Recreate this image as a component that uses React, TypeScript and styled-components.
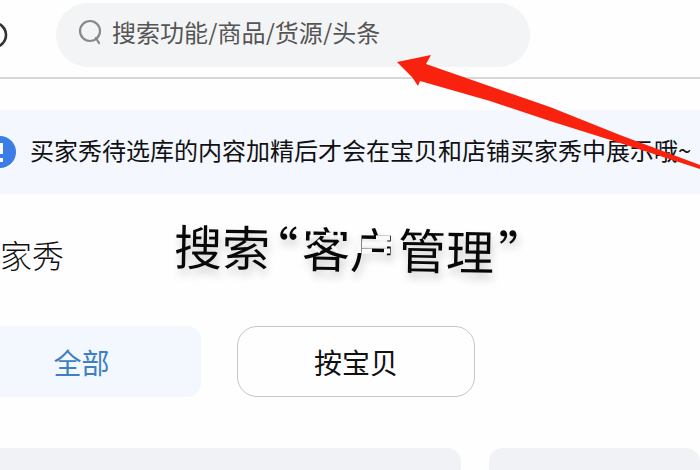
import React from "react";
import styled, { createGlobalStyle } from "styled-components";

const GlobalStyle = createGlobalStyle`
  * { box-sizing: border-box; }
  body {
    margin: 0;
    background: #fefefe;
    color: #111;
    font-family: "Noto Sans CJK SC", sans-serif;
    overflow: hidden;
  }
  button, input { font-family: inherit; }
`;

const Page = styled.div`
  position: relative;
  height: 100vh;
  overflow: hidden;
`;

/* The page is scrolled sideways, so its first 32px lie past the left edge. */
const Scrolled = styled.div`
  display: flex;
  flex-direction: column;
  height: 100%;
  margin-left: -32px;
`;

const Header = styled.header`
  display: flex;
  align-items: center;
  gap: 48px;
  padding: 3px 16px 10px 12px;
  border-bottom: 2px solid #d6d8d8;
`;

const RingIcon = styled.svg`
  flex: none;
  width: 28px;
  height: 28px;
`;

const SearchBox = styled.label`
  display: flex;
  flex: 0 1 474px;
  gap: 8px;
  height: 64px;
  padding: 14px 24px 18px 22px;
  border-radius: 32px;
  background: #f3f4f5;
`;

const SearchIcon = styled.svg`
  flex: none;
  width: 26px;
  height: 28px;
`;

const SearchInput = styled.input`
  flex: 1;
  min-width: 0;
  height: 28px;
  padding: 0;
  border: 0;
  outline: 0;
  background: transparent;
  font-size: 24px;
  color: #555;
  &::placeholder { color: #555; opacity: 1; }
`;

const Notice = styled.section`
  display: flex;
  flex: none;
  align-items: center;
  gap: 14px;
  height: 84px;
  margin-top: 31px;
  padding-left: 16px;
  background: #f4f7fe;
`;

const NoticeIcon = styled.svg`
  flex: none;
  width: 32px;
  height: 32px;
`;

const NoticeText = styled.p`
  margin: 0;
  padding-bottom: 4px;
  font-size: 24px;
  line-height: 36px;
  white-space: nowrap;
`;

const TitleRow = styled.div`
  display: flex;
  flex: none;
  align-items: center;
  height: 120px;
`;

const Title = styled.h1`
  margin: 0;
  font-size: 32px;
  font-weight: 300;
  line-height: 48px;
`;

const Filters = styled.div`
  display: flex;
  flex: none;
  gap: 36px;
  margin-top: 12px;
`;

const Filter = styled.button<{ $active?: boolean }>`
  width: ${(p) => (p.$active ? 233 : 238)}px;
  height: 71px;
  padding: ${(p) => (p.$active ? "0 6px 0 0" : "0")};
  border: ${(p) => (p.$active ? "0" : "1px solid #c4c5c6")};
  border-radius: ${(p) => (p.$active ? 14 : 20)}px;
  background: ${(p) => (p.$active ? "#f3f7fe" : "#fefefe")};
  color: ${(p) => (p.$active ? "#3f7fc4" : "#111")};
  font-size: 28px;
`;

const Cards = styled.div`
  display: grid;
  flex: 1;
  grid-template-columns: 7fr 3fr;
  gap: 28px;
  margin-top: 51px;
`;

const Card = styled.div`
  border-radius: 14px 14px 0 0;
  background: #f1f2f5;
`;

const Caption = styled.div`
  position: absolute;
  top: 213px;
  left: 174px;
  display: flex;
  font-size: 48px;
  line-height: 68px;
  white-space: nowrap;
  color: #080808;
  text-shadow: 2px 6px 8px rgba(0, 0, 0, 0.2);
  transform: rotate(1deg);
`;

/* Half-width forms of the full-width quotation marks. */
const Quote = styled.span`
  padding: 0 4px;
  font-feature-settings: "halt" 1;
`;

const Smudge = styled.svg`
  position: absolute;
  top: 226px;
  left: 298px;
  width: 108px;
  height: 34px;
`;

const Arrow = styled.svg`
  position: absolute;
  top: 50px;
  left: 396px;
  width: 304px;
  height: 126px;
`;

export default function App() {
  return (
    <Page>
      <GlobalStyle />
      <Scrolled>
        <Header>
          <RingIcon viewBox="0 0 28 28" aria-hidden="true">
            <circle cx="14" cy="14" r="12" fill="none" stroke="#333" strokeWidth="2.6" />
          </RingIcon>
          <SearchBox>
            <SearchIcon viewBox="0 0 26 28" fill="none" stroke="#85898c" strokeWidth="2.2" aria-hidden="true">
              <circle cx="12" cy="14" r="10" />
              <path d="M18 21l3 5" strokeLinecap="round" />
            </SearchIcon>
            <SearchInput type="text" placeholder="搜索功能/商品/货源/头条" aria-label="搜索" />
          </SearchBox>
        </Header>
        <Notice>
          <NoticeIcon viewBox="0 0 32 32" aria-hidden="true">
            <circle cx="16" cy="16" r="16" fill="#3b7de6" />
            <path d="M17 7v11M17 22v4" stroke="#fff" strokeWidth="4" />
          </NoticeIcon>
          <NoticeText>买家秀待选库的内容加精后才会在宝贝和店铺买家秀中展示哦~</NoticeText>
        </Notice>
        <TitleRow>
          <Title>买家秀</Title>
        </TitleRow>
        <Filters>
          <Filter type="button" $active>全部</Filter>
          <Filter type="button">按宝贝</Filter>
        </Filters>
        <Cards>
          <Card />
          <Card />
        </Cards>
      </Scrolled>
      <Caption>
        搜索<Quote>“</Quote>客户管理<Quote>”</Quote>
      </Caption>
      <Smudge viewBox="0 0 108 34" fill="none" stroke="#fafafa" strokeWidth="3" aria-hidden="true">
        <path d="M14 4v8M34 4v8M41 4v8M20 14l4 4M14 20l8 6M34 20l6 6M28 8h6" />
        <path d="M61 8v19M64 25h10M78 12h14M64 18h30M86 25h6" strokeWidth="5" />
      </Smudge>
      <Arrow viewBox="0 0 304 126" aria-hidden="true">
        <path
          d="M1 12L35 5L30 14L154 57L224 85L304 115V119L224 93L154 71L94 51L24 31L22 36L16 27Z"
          fill="#f9220f"
        />
      </Arrow>
    </Page>
  );
}
